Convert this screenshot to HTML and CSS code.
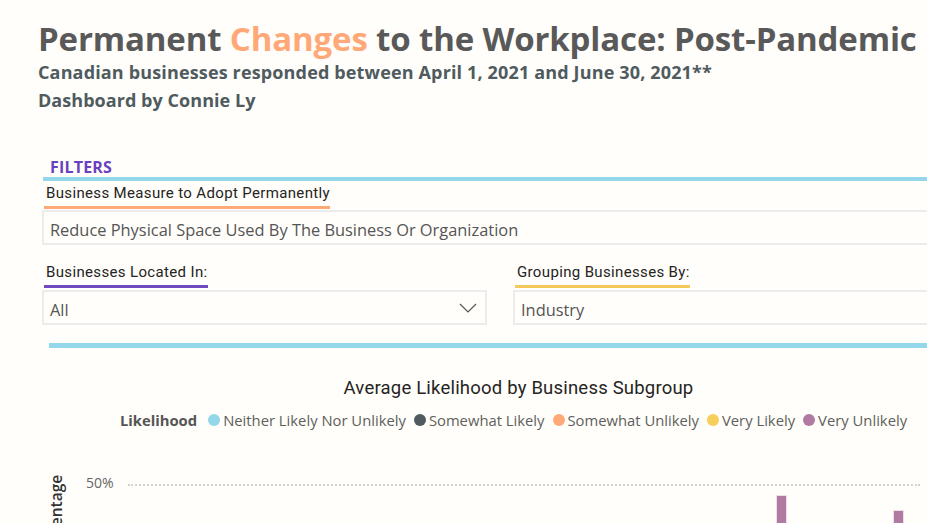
FILE: index.html
```html
<!DOCTYPE html>
<html>
<head>
<meta charset="utf-8">
<link rel="stylesheet" href="styles.css">
</head>
<body>
<div class="page">
  <header class="header">
    <h1 class="title">Permanent <span class="accent">Changes</span> to the Workplace: Post-Pandemic</h1>
    <p class="subtitle">Canadian businesses responded between April 1, 2021 and June 30, 2021**</p>
    <p class="subtitle byline">Dashboard by Connie Ly</p>
  </header>

  <section class="filters">
    <div class="filters-head">FILTERS</div>
    <div class="rule"></div>

    <div class="slicer wide">
      <div class="slicer-label"><span class="lbl u-orange">Business Measure to Adopt Permanently</span></div>
      <div class="box">Reduce Physical Space Used By The Business Or Organization</div>
    </div>

    <div class="slicer-row">
      <div class="slicer left">
        <div class="slicer-label"><span class="lbl u-purple">Businesses Located In:</span></div>
        <div class="box dropdown">
          <span>All</span>
          <svg class="chev" width="18" height="10" viewBox="0 0 18 10"><path d="M1 1 L9 9 L17 1" fill="none" stroke="#555" stroke-width="1.2"/></svg>
        </div>
      </div>
      <div class="slicer right">
        <div class="slicer-label"><span class="lbl u-yellow">Grouping Businesses By:</span></div>
        <div class="box">Industry</div>
      </div>
    </div>
    <div class="rule rule2"></div>
  </section>

  <section class="chart">
    <div class="chart-head">
      <div class="chart-title">Average Likelihood by Business Subgroup</div>
      <div class="legend">
        <span class="legend-title">Likelihood</span>
        <span class="item"><i class="dot c1"></i>Neither Likely Nor Unlikely</span>
        <span class="item"><i class="dot c2"></i>Somewhat Likely</span>
        <span class="item"><i class="dot c3"></i>Somewhat Unlikely</span>
        <span class="item"><i class="dot c4"></i>Very Likely</span>
        <span class="item"><i class="dot c5"></i>Very Unlikely</span>
      </div>
    </div>
    <div class="plot-row">
      <div class="ylabel">Percentage</div>
      <div class="ticks"><span>50%</span></div>
      <div class="plot">
        <div class="grid"></div>
        <div class="bar" style="left:649px;top:12px;height:60px"></div>
        <div class="bar" style="left:766px;top:27px;height:45px"></div>
      </div>
    </div>
  </section>
</div>
</body>
</html>
```

FILE: styles.css
```css
html, body {
  margin: 0;
  padding: 0;
  background: #fffefa;
  overflow: hidden;
}
.page {
  width: 927px;
  height: 523px;
  overflow: hidden;
  background: #fffefa;
}
.header {
  padding: 19px 0 0 38px;
  font-family: "Open Sans", sans-serif;
}
.title {
  margin: 0;
  font-size: 33px;
  line-height: 40px;
  font-weight: 700;
  color: #595959;
  white-space: nowrap;
  letter-spacing: -0.15px;
}
.accent { color: #ffa878; }
.subtitle {
  margin: 0;
  font-size: 18px;
  line-height: 27px;
  font-weight: 700;
  color: #4f5b5f;
  white-space: nowrap;
  letter-spacing: 0.15px;
}
.byline { margin-top: 1px; letter-spacing: 0.05px; }
.filters {
  margin-top: 43px;
  padding-left: 42px;
  font-family: "Roboto", sans-serif;
}
.filters-head {
  padding-left: 8px;
  font-family: "Open Sans", sans-serif;
  font-weight: 700;
  font-size: 16px;
  line-height: 20px;
  color: #6b3fc1;
  letter-spacing: 0.2px;
  margin: 0;
}
.rule {
  height: 4px;
  background: #94d6ea;
  margin-left: 1px;
  width: 900px;
}
.slicer-label {
  padding-left: 2px;
  height: 30px;
}
.wide .slicer-label { height: 29px; }
.lbl {
  display: inline-block;
  font-size: 15px;
  line-height: 25px;
  color: #252423;
  padding: 0 0 0 2px;
  letter-spacing: 0.35px;
  border-bottom: 3px solid;
}
.u-orange { border-color: #ffa878; }
.u-purple { border-color: #7048c0; }
.u-yellow { border-color: #f5c85a; }
.box {
  box-sizing: border-box;
  height: 35px;
  border: 2px solid #ececec;
  padding: 3px 8px 0 6px;
  display: flex;
  align-items: center;
  font-family: "Open Sans", sans-serif;
  font-size: 16.4px;
  color: #555;
  background: #fffefa;
}
.wide .box { width: 920px; }
.slicer-row {
  display: flex;
  gap: 26px;
  margin-top: 15px;
}
.left .box { width: 445px; justify-content: space-between; }
.right .box { width: 450px; }
.chev { margin-top: -3px; }
.rule2 {
  height: 5px;
  margin-top: 18px;
  margin-left: 7px;
}
.chart {
  font-family: "Open Sans", sans-serif;
}
.chart-head {
  margin-left: 110px;
  width: 817px;
  display: flex;
  flex-direction: column;
  align-items: center;
  padding-top: 28px;
}
.chart-title {
  font-family: "Roboto", sans-serif;
  font-size: 18.5px;
  line-height: 24px;
  color: #252423;
  letter-spacing: 0.2px;
}
.legend {
  margin-top: 10px;
  display: flex;
  align-items: center;
  font-size: 14.8px;
  line-height: 20px;
  color: #605e5c;
  white-space: nowrap;
  margin-left: -2px;
}
.legend-title {
  font-weight: 700;
  color: #555;
  margin-right: 11px;
}
.item {
  display: flex;
  align-items: center;
  margin-right: 8px;
}
.dot {
  width: 12px;
  height: 12px;
  border-radius: 50%;
  margin-right: 3px;
}
.c1 { background: #94d6ea; }
.c2 { background: #4f5b5f; }
.c3 { background: #ffa878; }
.c4 { background: #f5cf5a; }
.c5 { background: #b07aa1; }
.plot-row {
  display: flex;
  margin-top: 54px;
  height: 80px;
}
.ylabel {
  width: 16px;
  margin-left: 48px;
  writing-mode: vertical-rl;
  transform: rotate(180deg);
  font-size: 15.5px;
  font-weight: 600;
  color: #333;
  text-align: right;
  height: 100px;
  margin-top: -9px;
  line-height: 16px;
}
.ticks {
  width: 42px;
  margin-left: 22px;
  font-size: 14px;
  color: #666;
  line-height: 16px;
  margin-top: -9px;
}
.plot {
  position: relative;
  flex: 1;
}
.grid {
  border-top: 2px dotted #d4d4d4;
  width: 792px;
  margin-left: 0;
}
.bar {
  position: absolute;
  width: 9px;
  background: #b07aa1;
  box-shadow: 0 0 0 1px #f0dfe8;
}
```
